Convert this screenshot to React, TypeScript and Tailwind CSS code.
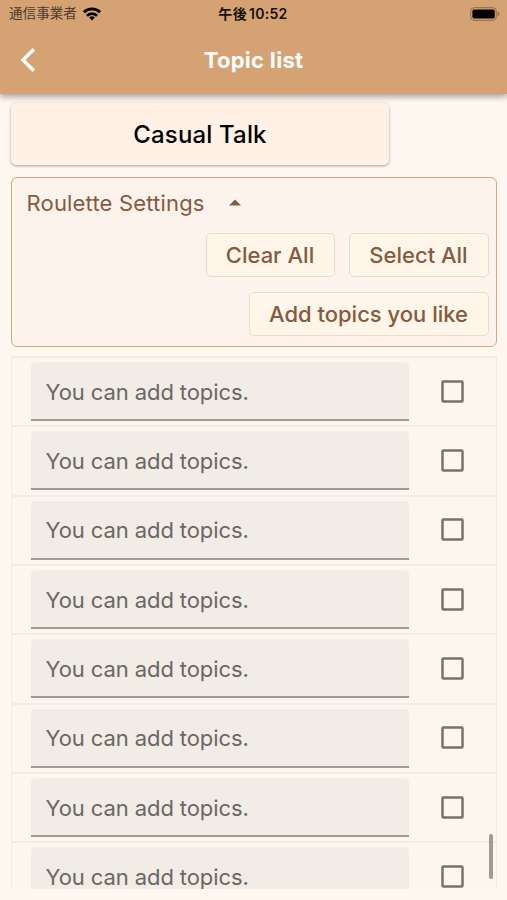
import { useState } from "react";

const ROW_COUNT = 8;

function StatusBar() {
  return (
    <div className="grid h-[27px] grid-cols-3 items-center pl-[9px] pr-[7px] text-[13px] leading-none">
      <div className="flex items-center gap-[6px] whitespace-nowrap text-[#4d3b2a]">
        <span className="text-[13.6px]">通信事業者</span>
        <svg width="18" height="14" viewBox="0 0 18 14" fill="none" stroke="#000" strokeWidth="2.8">
          <path d="M0.9 5.2a11.5 11.5 0 0 1 16.2 0" />
          <path d="M3.9 8.7a7.2 7.2 0 0 1 10.2 0" />
          <path d="M9 13.6l-2.9-3a4.2 4.2 0 0 1 5.8 0z" fill="#000" stroke="none" />
        </svg>
      </div>
      <span className="-ml-[3px] whitespace-nowrap text-center text-[14px] font-semibold tracking-[0.3px] text-[#171008]">
        午後<span className="ml-[2px]">10:52</span>
      </span>
      <svg className="justify-self-end" width="30" height="14" viewBox="0 0 30 14">
        <rect x="0.7" y="0.7" width="25.6" height="12.6" rx="3.5" fill="none" stroke="#8f6c4b" />
        <rect x="2.4" y="2.4" width="22.4" height="9.2" rx="1.8" fill="#000" />
        <path d="M27.6 4.6c2.4 0.8 2.4 4 0 4.8z" fill="#8f6c4b" />
      </svg>
    </div>
  );
}

function SettingsButton({
  label,
  className,
  onClick,
}: {
  label: string;
  className: string;
  onClick?: () => void;
}) {
  return (
    <button
      type="button"
      onClick={onClick}
      className={`h-[44px] whitespace-nowrap rounded-[5px] border border-[#e9dccb] bg-[#fff6e9] text-[22px] font-medium text-[#855a3e] ${className}`}
    >
      {label}
    </button>
  );
}

export default function App() {
  const [checked, setChecked] = useState<boolean[]>(Array(ROW_COUNT).fill(false));
  const [topics, setTopics] = useState<string[]>(Array(ROW_COUNT).fill(""));

  const setAll = (value: boolean) => setChecked(checked.map(() => value));

  return (
    <div className="flex h-[900px] w-[507px] flex-col overflow-hidden bg-[#fff8f0] font-['Inter','Noto_Sans_CJK_JP',sans-serif]">
      <header className="relative z-10 h-[94px] shrink-0 bg-[#d4a273] shadow-[0_3px_6px_rgba(0,0,0,0.35)]">
        <StatusBar />
        <div className="grid h-[66px] grid-cols-[60px_1fr_60px] items-center">
          <button type="button" aria-label="Back" className="pl-[20px]">
            <svg width="16" height="26" viewBox="0 0 16 26" fill="none" stroke="#fff" strokeWidth="3.4">
              <path d="M13.8 2.2L3 13l10.8 10.8" />
            </svg>
          </button>
          <h1 className="text-center text-[22px] font-bold tracking-[0.3px] text-white">Topic list</h1>
        </div>
      </header>

      <div className="ml-[11px] mt-[9px] flex h-[62px] w-[378px] shrink-0 items-center justify-center rounded-[5px] bg-[#fff1e6] pt-px text-[24px] font-medium tracking-[0.15px] text-black shadow-[0_1px_3px_rgba(0,0,0,0.35)]">
        Casual Talk
      </div>

      <section className="mx-[10.5px] mt-[12px] h-[170px] shrink-0 rounded-[6px] border border-[#dba77e] bg-[#fcf3ec] pr-[7px]">
        <div className="flex h-[55px] items-center gap-[24px] pb-[4px] pl-[15px] text-[22px] tracking-[0.18px] text-[#855a3e]">
          <span>Roulette Settings</span>
          <svg className="-mt-[2px]" width="12" height="7" viewBox="0 0 12 7" fill="#855a3e">
            <path d="M0 6.5L6 0.5l6 6z" />
          </svg>
        </div>
        <div className="flex justify-end gap-[14px]">
          <SettingsButton label="Clear All" className="w-[129px]" onClick={() => setAll(false)} />
          <SettingsButton label="Select All" className="w-[140px]" onClick={() => setAll(true)} />
        </div>
        <div className="mt-[15px] flex justify-end">
          <SettingsButton label="Add topics you like" className="w-[240px]" />
        </div>
      </section>

      <div className="relative mx-[10.5px] mt-[9px] h-[533px] shrink-0">
        <ul className="h-full overflow-hidden border-x border-[#f3ebe4] bg-[#fdf6ef]">
          {topics.map((topic, i) => (
            <li
              key={i}
              className="flex h-[69.35px] items-start border-t-2 border-[#f3ece5] pl-[19px] pt-[4px]"
            >
              <input
                className="h-[59px] w-[378px] rounded-t-[5px] border-b-2 border-[#a09b96] bg-[#f1ece6] px-[15px] pt-[2px] text-[22px] tracking-[-0.09px] text-[#6b6762] placeholder-[#6b6762] outline-none"
                placeholder="You can add topics."
                value={topic}
                onChange={(e) => setTopics(topics.map((t, j) => (j === i ? e.target.value : t)))}
              />
              <button
                type="button"
                role="checkbox"
                aria-checked={checked[i]}
                aria-label="Select topic"
                className="ml-[32px] mt-[17.5px]"
                onClick={() => setChecked(checked.map((c, j) => (j === i ? !c : c)))}
              >
                <svg width="23" height="23" viewBox="0 0 23 23" fill="none" stroke="#77726d" strokeWidth="2.5">
                  <rect x="1.5" y="1.5" width="20" height="20" rx="1" />
                  {checked[i] && <path d="M5.5 12l4 4 8-9" />}
                </svg>
              </button>
            </li>
          ))}
        </ul>
        <div className="absolute right-[3.5px] top-[478px] h-[45px] w-[4px] rounded-full bg-[#a09b96]" />
      </div>
    </div>
  );
}
